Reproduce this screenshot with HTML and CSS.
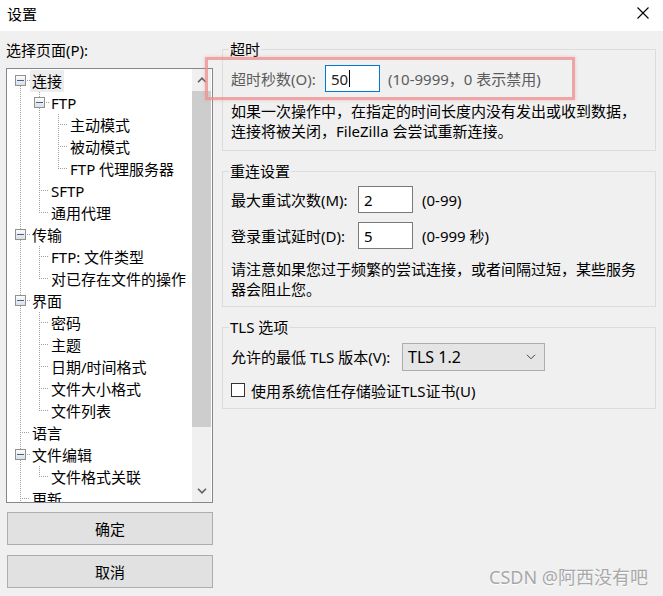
FILE: index.html
```html
<!DOCTYPE html>
<html lang="zh-CN">
<head>
<meta charset="utf-8">
<title>设置</title>
<link rel="stylesheet" href="styles.css">
</head>
<body>
<div class="window">
  <header class="titlebar">
    <span class="title">设置</span>
    <span class="close" aria-label="关闭"><svg width="12" height="12" viewBox="0 0 12 12"><path d="M0.5 0.5 L11.5 11.5 M11.5 0.5 L0.5 11.5" stroke="#000" stroke-width="1.1" fill="none"/></svg></span>
  </header>
  <main class="content">
    <section class="left">
      <div class="left-label">选择页面(P):</div>
      <div class="tree">
        <ul class="tree-list">
          <li class="row"><span class="c x first"><b class="box"></b></span><span class="label sel">连接</span></li>
          <li class="row"><span class="c v"></span><span class="c x"><b class="box"></b></span><span class="label">FTP</span></li>
          <li class="row"><span class="c v"></span><span class="c v"></span><span class="c t"></span><span class="label">主动模式</span></li>
          <li class="row"><span class="c v"></span><span class="c v"></span><span class="c t"></span><span class="label">被动模式</span></li>
          <li class="row"><span class="c v"></span><span class="c v"></span><span class="c l"></span><span class="label">FTP 代理服务器</span></li>
          <li class="row"><span class="c v"></span><span class="c t"></span><span class="label">SFTP</span></li>
          <li class="row"><span class="c v"></span><span class="c l"></span><span class="label">通用代理</span></li>
          <li class="row"><span class="c x"><b class="box"></b></span><span class="label">传输</span></li>
          <li class="row"><span class="c v"></span><span class="c t"></span><span class="label">FTP: 文件类型</span></li>
          <li class="row"><span class="c v"></span><span class="c l"></span><span class="label">对已存在文件的操作</span></li>
          <li class="row"><span class="c x"><b class="box"></b></span><span class="label">界面</span></li>
          <li class="row"><span class="c v"></span><span class="c t"></span><span class="label">密码</span></li>
          <li class="row"><span class="c v"></span><span class="c t"></span><span class="label">主题</span></li>
          <li class="row"><span class="c v"></span><span class="c t"></span><span class="label">日期/时间格式</span></li>
          <li class="row"><span class="c v"></span><span class="c t"></span><span class="label">文件大小格式</span></li>
          <li class="row"><span class="c v"></span><span class="c l"></span><span class="label">文件列表</span></li>
          <li class="row"><span class="c t"></span><span class="label">语言</span></li>
          <li class="row"><span class="c x"><b class="box"></b></span><span class="label">文件编辑</span></li>
          <li class="row"><span class="c v"></span><span class="c l"></span><span class="label">文件格式关联</span></li>
          <li class="row"><span class="c t"></span><span class="label">更新</span></li>
        </ul>
        <div class="scrollbar">
          <div class="sb-btn"><svg width="10" height="6" viewBox="0 0 10 6"><path d="M1 5.2 L5 1.2 L9 5.2" stroke="#606060" stroke-width="1.6" fill="none"/></svg></div>
          <div class="sb-thumb"></div>
          <div class="sb-track"></div>
          <div class="sb-btn"><svg width="10" height="6" viewBox="0 0 10 6"><path d="M1 0.8 L5 4.8 L9 0.8" stroke="#606060" stroke-width="1.6" fill="none"/></svg></div>
        </div>
      </div>
      <div class="btn btn-ok">确定</div>
      <div class="btn btn-cancel">取消</div>
    </section>

    <section class="right">
      <fieldset class="group g-timeout">
        <legend>超时</legend>
        <div class="field-row r-timeout">
          <span class="flabel w-timeout dim">超时秒数(O):</span>
          <span class="input focus w-small">50<i class="caret"></i></span>
          <span class="hint h8 dim">(10-9999，0 表示禁用)</span>
        </div>
        <p class="desc d-timeout">如果一次操作中，在指定的时间长度内没有发出或收到数据，<br>连接将被关闭，FileZilla 会尝试重新连接。</p>
      </fieldset>

      <fieldset class="group g-retry">
        <legend>重连设置</legend>
        <div class="field-row r-retry1">
          <span class="flabel w-retry">最大重试次数(M):</span>
          <span class="input w-small">2</span>
          <span class="hint h9">(0-99)</span>
        </div>
        <div class="field-row r-retry2">
          <span class="flabel w-retry">登录重试延时(D):</span>
          <span class="input w-small">5</span>
          <span class="hint h9">(0-999 秒)</span>
        </div>
        <p class="desc d-retry">请注意如果您过于频繁的尝试连接，或者间隔过短，某些服务<br>器会阻止您。</p>
      </fieldset>

      <fieldset class="group g-tls">
        <legend>TLS 选项</legend>
        <div class="field-row r-tls">
          <span class="flabel w-tls">允许的最低 TLS 版本(V):</span>
          <span class="combo"><span class="combo-text">TLS 1.2</span><svg width="10" height="6" viewBox="0 0 10 6"><path d="M1 0.8 L5 4.8 L9 0.8" stroke="#404040" stroke-width="1" fill="none"/></svg></span>
        </div>
        <label class="check-row"><span class="checkbox"></span><span>使用系统信任存储验证TLS证书(U)</span></label>
      </fieldset>
    </section>
  </main>
  <div class="highlight"></div>
  <div class="watermark">CSDN @阿西没有吧</div>
</div>
</body>
</html>
```

FILE: styles.css
```css
html, body {
  margin: 0;
  padding: 0;
}
body {
  width: 663px;
  height: 596px;
  overflow: hidden;
  font-family: "Noto Sans", "Noto Sans CJK SC", sans-serif;
  font-size: 15px;
  color: #000;
  background: #f0f0f0;
}
.window {
  position: relative;
  width: 663px;
  height: 596px;
  background: #f0f0f0;
}
.titlebar {
  height: 31px;
  background: #fff;
  display: flex;
  align-items: flex-start;
  justify-content: space-between;
}
.title {
  padding: 4px 0 0 7px;
  line-height: 20px;
}
.close {
  display: block;
  width: 12px;
  height: 12px;
  margin: 7px 14px 0 0;
}
.close svg { display: block; }

.content {
  display: flex;
  align-items: flex-start;
  padding-left: 6px;
}
.left {
  width: 207px;
  padding-top: 9px;
}
.left-label {
  line-height: 20px;
  height: 20px;
  margin-bottom: 8px;
}
.tree {
  box-sizing: border-box;
  height: 435px;
  border: 1px solid #828790;
  background: #fff;
  display: flex;
}
.tree-list {
  list-style: none;
  margin: 0;
  padding: 1px 0 0 4px;
  flex: 1;
  overflow: hidden;
}
.row {
  display: flex;
  height: 22px;
  white-space: nowrap;
}
.c {
  --vdot: repeating-linear-gradient(to bottom, #a0a0a0 0 1px, transparent 1px 2px);
  --hdot: repeating-linear-gradient(to right, #a0a0a0 0 1px, transparent 1px 2px);
  flex: 0 0 19px;
  height: 22px;
  background-repeat: no-repeat;
}
.v {
  background-image: var(--vdot);
  background-size: 1px 22px;
  background-position: 9px 0;
}
.t {
  background-image: var(--vdot), var(--hdot);
  background-size: 1px 22px, 9px 1px;
  background-position: 9px 0, 11px 10px;
}
.l {
  background-image: var(--vdot), var(--hdot);
  background-size: 1px 11px, 9px 1px;
  background-position: 9px 0, 11px 10px;
}
.x {
  background-image: var(--vdot), var(--hdot);
  background-size: 1px 22px, 3px 1px;
  background-position: 9px 0, 16px 10px;
}
.x.first {
  background-size: 1px 11px, 3px 1px;
  background-position: 9px 12px, 16px 10px;
}
.box {
  display: block;
  box-sizing: border-box;
  width: 11px;
  height: 11px;
  margin: 5px 0 0 4px;
  border: 1px solid #919191;
  background: linear-gradient(#fcfcfc, #dedede);
}
.box::before {
  content: "";
  display: block;
  width: 7px;
  height: 1px;
  margin: 4px 0 0 1px;
  background: #3a5eb0;
}
.label {
  padding: 0 2px;
  line-height: 22px;
  height: 22px;
}
.label.sel {
  background: #ececec;
}
.scrollbar {
  flex: 0 0 19px;
  margin-right: 1px;
  display: flex;
  flex-direction: column;
  background: #f0f0f0;
}
.sb-btn {
  height: 22px;
  display: flex;
  align-items: center;
  justify-content: center;
}
.sb-btn svg { display: block; }
.sb-thumb {
  height: 336px;
  background: #cdcdcd;
}
.sb-track { flex: 1; }

.btn {
  box-sizing: border-box;
  width: 206px;
  height: 33px;
  margin-left: 1px;
  border: 1px solid #adadad;
  background: #e1e1e1;
  display: flex;
  align-items: center;
  justify-content: center;
}
.btn-ok { margin-top: 9px; }
.btn-cancel { margin-top: 10px; }

.right {
  margin-left: 9px;
  padding-top: 8px;
  width: 434px;
}
.group {
  margin: 0;
  padding: 0 8px 9px 8px;
  border: 1px solid #dcdcdc;
  min-width: 0;
}
.group legend {
  padding: 0 1px;
  margin-left: -2px;
  line-height: 20px;
}
.g-retry { margin-top: 10px; padding-bottom: 7px; }
.g-tls { margin-top: 10px; padding-bottom: 8px; }
.field-row {
  display: flex;
  align-items: center;
  height: 27px;
}
.r-timeout { margin-top: 6px; }
.r-retry1 { margin-top: 5px; }
.r-retry2 { margin-top: 9px; }
.r-tls { margin-top: 6px; }
.flabel { white-space: nowrap; }
.w-timeout { width: 94px; }
.w-retry { width: 127px; }
.w-tls { width: 171px; }
.dim { color: #5c5c5c; }
.input {
  box-sizing: border-box;
  height: 27px;
  border: 1px solid #7a7a7a;
  background: #fff;
  padding-left: 5px;
  display: flex;
  align-items: center;
}
.input.focus { border-color: #0078d7; color: #222; }
.w-small { width: 55px; }
.caret {
  display: inline-block;
  width: 1px;
  height: 17px;
  background: #000;
  margin-left: 1px;
}
.hint { white-space: nowrap; }
.h8 { margin-left: 8px; }
.h9 { margin-left: 9px; }
.desc {
  margin: 0;
  line-height: 20px;
}
.d-timeout { margin-top: 9px; }
.d-retry { margin-top: 10px; }
.combo {
  box-sizing: border-box;
  width: 143px;
  height: 28px;
  border: 1px solid #adadad;
  background: #e5e5e5;
  display: flex;
  align-items: center;
  justify-content: space-between;
  padding: 0 8px 0 5px;
}
.combo-text { font-size: 16px; }
.combo svg { display: block; }
.check-row {
  display: flex;
  align-items: center;
  height: 20px;
  margin-top: 10px;
}
.checkbox {
  box-sizing: border-box;
  width: 14px;
  height: 14px;
  border: 1px solid #333;
  background: #fff;
  margin-right: 6px;
}

.highlight {
  position: absolute;
  left: 205px;
  top: 57px;
  width: 370px;
  height: 43px;
  box-sizing: border-box;
  border: 3px solid rgba(238, 140, 140, 0.75);
  box-shadow: 0 0 3px rgba(238, 140, 140, 0.5);
}
.watermark {
  position: absolute;
  right: 15px;
  top: 566px;
  font-size: 18px;
  line-height: 22px;
  color: #a8a8a8;
  text-shadow: 0 1px 1px #fff;
}
```
